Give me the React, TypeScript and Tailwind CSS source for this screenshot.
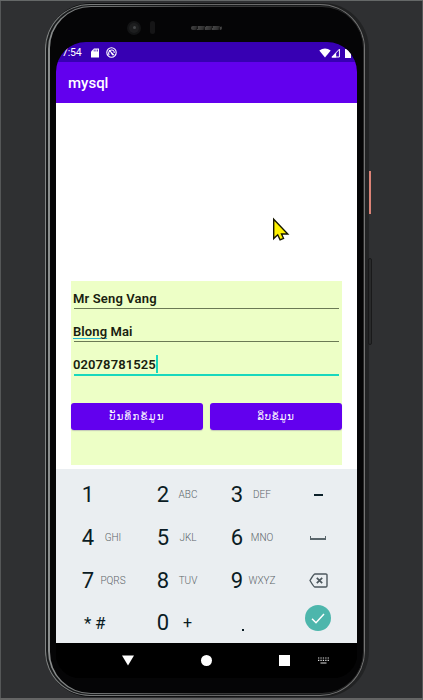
import React from "react";

function StatusBar() {
  return (
    <div className="flex h-5 shrink-0 items-center bg-[#3700b3] pl-[6px] pr-[6px] text-white">
      <span className="w-[21px] whitespace-nowrap pt-px text-[10.5px] leading-5 tracking-[-0.2px]">7:54</span>
      <svg className="ml-[8px] mt-px" width="8" height="10" viewBox="0 0 8 10">
        <path d="M3 0.5h5v9H0V3.5z" fill="#fff" />
        <path d="M3.2 1.5v2M4.9 1.5v2M6.5 1.5v2" stroke="#3700b3" strokeWidth=".7" />
      </svg>
      <svg className="ml-[7px] mt-px" width="11" height="11" viewBox="0 0 11 11" fill="none" stroke="#fff">
        <circle cx="5.5" cy="5.5" r="4.7" strokeWidth="1.1" />
        <path d="M3.2 8.2C2 6.2 2.6 3.6 5.4 3c2-.2 3 1.2 2.8 3M3 3.2l5 4.9M5 5.5l1.8 2.8" strokeWidth="1.1" />
      </svg>
      <div className="grow" />
      <svg className="mt-px" width="12" height="10" viewBox="0 0 12 10">
        <path d="M0.3 2.6Q6-1.6 11.7 2.6L6 9.6z" fill="#fff" />
      </svg>
      <svg className="mt-px" width="9" height="10" viewBox="0 0 9 10">
        <path d="M.9 9 8.4 1.2V9z" fill="none" stroke="#fff" strokeWidth="1" />
        <path d="M.5 9.4 5.2 4.5v4.9z" fill="#fff" />
      </svg>
      <svg className="ml-[5px] mt-px" width="6" height="10" viewBox="0 0 6 10">
        <path d="M0 1h1V0h3.5L6 2v8H0z" fill="#fff" />
      </svg>
    </div>
  );
}

function Key({ digit, letters }: { digit: string; letters?: string }) {
  return (
    <div className="flex items-center">
      <span className="w-6 text-center text-[22px] leading-none text-[#0b1c24]">{digit}</span>
      <span className="flex w-[26px] justify-center whitespace-nowrap pb-px text-[10px] font-light text-[#5c6569]">{letters}</span>
    </div>
  );
}

function Keypad() {
  return (
    <div className="grid h-[174px] shrink-0 grid-cols-[75px_74px_75px_36px] grid-rows-[42px_43px_43px_42px] bg-[#eaeef1] pl-5 pt-[5px]">
      <Key digit="1" />
      <Key digit="2" letters="ABC" />
      <Key digit="3" letters="DEF" />
      <div className="flex items-center justify-center">
        <div className="h-[2px] w-[9px] bg-[#0b2029]" />
      </div>
      <Key digit="4" letters="GHI" />
      <Key digit="5" letters="JKL" />
      <Key digit="6" letters="MNO" />
      <div className="flex items-center justify-center">
        <div className="h-[4px] w-[16px] border-x border-b-2 border-[#59656b]" />
      </div>
      <Key digit="7" letters="PQRS" />
      <Key digit="8" letters="TUV" />
      <Key digit="9" letters="WXYZ" />
      <div className="flex items-center justify-center pb-px">
        <svg width="19" height="15" viewBox="0 0 19 15" fill="none" stroke="#4c575d" strokeWidth="1.4">
          <path d="M5.8 1h11a1.2 1.2 0 0 1 1.2 1.2v10.6a1.2 1.2 0 0 1-1.2 1.2h-11Q4.8 14 1 7.5 4.8 1 5.8 1z" />
          <path d="m7.8 4.8 5.4 5.4m0-5.4-5.4 5.4" strokeWidth="1.7" />
        </svg>
      </div>
      <div className="flex items-center pl-[8px] text-[17px] leading-none text-[#0b1c24]">
        <span className="w-[11px]">*</span>
        <span>#</span>
      </div>
      <div className="flex items-center text-[#0b1c24]">
        <span className="w-6 text-center text-[22px] leading-none">0</span>
        <span className="w-[25px] text-center text-[16px] leading-none">+</span>
      </div>
      <div className="flex items-center pl-[17px] pt-[13px]">
        <div className="size-[2px] bg-[#0b1c24]" />
      </div>
      <div className="flex items-start justify-center pt-[3px]">
        <div className="flex size-[26px] shrink-0 items-center justify-center rounded-full bg-[#4db6ac]">
          <svg width="14" height="11" viewBox="0 0 14 11" fill="none" stroke="#fff" strokeWidth="1.5">
            <path d="m1 5.7 4 4L13 1" />
          </svg>
        </div>
      </div>
    </div>
  );
}

function NavigationBar() {
  return (
    <div className="flex h-[35px] shrink-0 items-center bg-black">
      <svg className="ml-[66px]" width="12" height="11" viewBox="0 0 12 11"><path d="M0 .5h12L6 10.5z" fill="#fff" /></svg>
      <div className="ml-[67px] size-[11px] rounded-full bg-white" />
      <div className="ml-[67px] size-[11px] bg-white" />
      <svg className="ml-[28px]" width="11" height="7" viewBox="0 0 11 7" stroke="#ddd" strokeWidth="1.2">
        <path d="M0 1h11M0 3.3h11" strokeDasharray="1.3 1.1" />
        <path d="M2.5 6h6" />
      </svg>
    </div>
  );
}

function Form() {
  return (
    <div className="mx-[15px] mt-[178px] h-[184px] shrink-0 bg-[#edffc6] text-[13px] font-semibold text-[#18210f]">
      <div className="mx-[3px] h-[28px] border-b border-[#6b7a55] pt-[8px] leading-[19px]">
        <span className="-ml-px tracking-[0.15px]">Mr Seng Vang</span>
      </div>
      <div className="mx-[3px] h-[33px] border-b border-[#6b7a55] pt-[13px] leading-[19px]">
        <span className="-ml-px tracking-[0.1px] underline decoration-[#20b7cf] decoration-1 underline-offset-2">Blong</span>
        <span className="tracking-[0.1px]"> Mai</span>
      </div>
      <div className="mx-[3px] flex h-[34px] items-start border-b-2 border-[#18d8bd] pt-[13px]">
        <span className="-ml-px leading-[19px] tracking-[0.1px]">02078781525</span>
        <div className="h-[18px] w-[2px] bg-[#18d8bd]" />
      </div>
      <div className="mt-[27px] flex gap-[7px] font-['DejaVu_Sans',sans-serif] text-[10px] font-normal text-white">
        <button className="h-[27px] w-[132px] rounded-[3px] bg-[#6200ee] pb-px tracking-[1.3px] shadow-[0_1px_1px_#8a79a866]">ບັນທຶກຂໍ້ມູນ</button>
        <button className="h-[27px] w-[132px] rounded-[3px] bg-[#6200ee] pb-px tracking-[0.8px] shadow-[0_1px_1px_#8a79a866]">ລຶບຂໍ້ມູນ</button>
      </div>
    </div>
  );
}

export default function App() {
  return (
    <div className="relative h-[700px] w-[423px] overflow-hidden border-t border-[#656868] bg-[#2f3032] font-[Roboto,sans-serif]">
      <div className="absolute left-[369px] top-[170px] h-[43px] w-[2px] bg-[#dc8377]" />
      <div className="absolute left-[368px] top-[257px] h-[87px] w-[4px] rounded-[2px] border border-[#19191a] bg-[#292a2b]" />
      <div className="ml-[45px] mt-[2px] h-[694px] w-[324px] rounded-[46px] bg-linear-to-r from-[#08090a] via-[#111] to-[#232425] py-px pl-0 pr-[4px]">
        <div className="h-full rounded-[45px] bg-linear-to-r from-[#808383] via-[#686868] to-[#757575] px-px py-px">
          <div className="h-full rounded-[44px] bg-[#181a1b] py-px pl-[2px] pr-0">
            <div className="h-full rounded-[43px] bg-linear-to-r from-[#8a8d8d] via-[#383838] to-[#282828] py-px pl-[2px] pr-px">
              <div className="flex h-full flex-col rounded-[41px] bg-[#050506] pl-[6px] pr-[5px]">
                <div className="flex h-[35px] shrink-0 items-center pt-[6px]">
                  <div className="ml-[71px] flex size-[14px] items-center justify-center rounded-full bg-[#131415]">
                    <div className="flex size-[10px] items-center justify-center rounded-full bg-[#1d1e1f]">
                      <div className="size-[3px] rounded-full bg-[#46484a]" />
                    </div>
                  </div>
                  <div className="ml-[9px] h-[13px] w-[5px] rounded bg-[#151516]" />
                  <div className="ml-[36px] h-[4px] w-[31px] rounded bg-[repeating-linear-gradient(110deg,#464646_0px,#303030_5px,#121212_7px)]" />
                </div>
                <div className="flex w-[301px] flex-col overflow-hidden rounded-b-[24px] rounded-t-[30px] bg-black">
                  <StatusBar />
                  <div className="flex h-[41px] shrink-0 items-center bg-[#6200ee] pl-[12px] pt-[2px] text-[15px] font-medium text-white">
                    mysql
                  </div>
                  <div className="flex h-[366px] shrink-0 flex-col bg-white">
                    <Form />
                  </div>
                  <Keypad />
                  <NavigationBar />
                </div>
              </div>
            </div>
          </div>
        </div>
      </div>
      <svg className="absolute left-[272px] top-[216px]" width="18" height="26" viewBox="0 0 18 26">
        <path d="M1.7 2.2v19.4l4-3.8 2.4 5 3.4-1.5-2-4.3h6.3z" fill="#fff200" stroke="#161600" strokeWidth="1.4" />
      </svg>
      <div className="absolute right-0 top-0 h-full w-px bg-[#555758]" />
      <div className="absolute left-0 top-0 h-full w-px bg-[#555758]" />
      <div className="absolute bottom-0 left-0 h-[2px] w-full bg-[#656565]" />
    </div>
  );
}
